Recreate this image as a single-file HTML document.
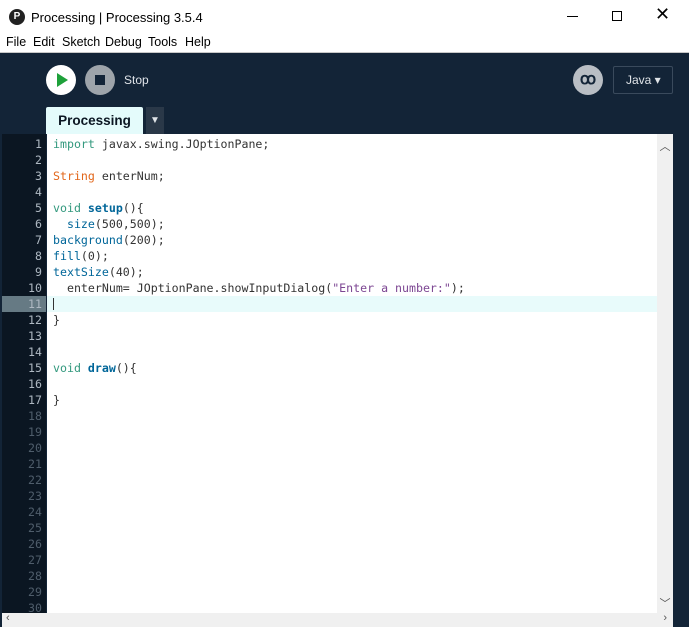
<!DOCTYPE html>
<html><head><style>
*{margin:0;padding:0;box-sizing:border-box}
body{width:689px;height:627px;overflow:hidden;background:#132437;font-family:"Liberation Sans",sans-serif;position:relative}
.title{position:absolute;left:0;top:0;width:689px;height:33px;background:#fff;font-size:13px;color:#000}
.menu{position:absolute;left:0;top:33px;width:689px;height:20px;background:#fff;font-size:12.5px;border-bottom:1px solid #c8c8c8}
.menu span{position:absolute;top:2px}
.code{font-family:"DejaVu Sans Mono","Liberation Mono",monospace;font-size:11.6px}
.gut{position:absolute;left:2px;top:134px;width:44px;height:479px;background:#0b1622}
.ed{position:absolute;left:47px;top:134px;width:610px;height:479px;background:#fff}
.ln{position:absolute;right:4px;width:40px;text-align:right;line-height:16px}
.cl{position:absolute;left:53px;line-height:16px;color:#333;white-space:pre}
.k{color:#33997e}.t{color:#e2661a}.f{color:#006699;font-weight:bold}.b{color:#006699}.s{color:#7d4793}
</style></head><body>
<div class="title">
<div style="position:absolute;left:9px;top:9px;width:16px;height:16px;border-radius:50%;background:#222;color:#fff;font-size:10px;font-weight:bold;text-align:center;line-height:16px">P</div>
<div style="position:absolute;left:31px;top:10px">Processing | Processing 3.5.4</div>
<div style="position:absolute;left:567px;top:16px;width:11px;height:1px;background:#000"></div>
<div style="position:absolute;left:612px;top:11px;width:10px;height:10px;border:1px solid #000"></div>
<div style="position:absolute;left:655px;top:4px;font-size:18px">✕</div>
</div>
<div class="menu"><span style="left:6px">File</span><span style="left:33px">Edit</span><span style="left:62px">Sketch</span><span style="left:105px">Debug</span><span style="left:148px">Tools</span><span style="left:185px">Help</span></div>
<div style="position:absolute;left:46px;top:65px;width:30px;height:30px;border-radius:50%;background:#fff"></div>
<div style="position:absolute;left:57px;top:73px;width:0;height:0;border-left:11px solid #1ea13a;border-top:7px solid transparent;border-bottom:7px solid transparent"></div>
<div style="position:absolute;left:85px;top:65px;width:30px;height:30px;border-radius:50%;background:#9ea4aa"></div>
<div style="position:absolute;left:95px;top:75px;width:10px;height:10px;background:#132437"></div>
<div style="position:absolute;left:124px;top:73px;color:#dfe3e8;font-size:12px">Stop</div>
<div style="position:absolute;left:573px;top:65px;width:30px;height:30px;border-radius:50%;background:#b9bec4;color:#132437;font-size:16px;font-weight:bold;text-align:center;line-height:30px">ꝏ</div>
<div style="position:absolute;left:613px;top:66px;width:60px;height:28px;border:1px solid #3a4a5c;border-radius:2px;color:#e0e4e8;font-size:12px;line-height:26px;padding-left:12px">Java ▾</div>
<div style="position:absolute;left:46px;top:107px;width:97px;height:27px;background:#e4fbfb;color:#0b1622;font-weight:bold;font-size:13.5px;text-align:center;line-height:27px;border-radius:2px 2px 0 0">Processing</div>
<div style="position:absolute;left:146px;top:107px;width:18px;height:27px;background:#2a3848;color:#e0e4e8;font-size:10px;text-align:center;line-height:27px">▼</div>
<div class="gut"></div>
<div class="ed"></div>
<div style="position:absolute;left:2px;top:296px;width:44px;height:16px;background:#667a84"></div>
<div style="position:absolute;left:47px;top:296px;width:610px;height:16px;background:#e8fbfb"></div>
<div style="position:absolute;left:53px;top:298px;width:1px;height:12px;background:#333"></div>
<div style="position:absolute;left:657px;top:134px;width:16px;height:479px;background:#f0f0f0;font-size:11px;color:#555;text-align:center"><div style="margin-top:4px">︿</div><div style="position:absolute;top:461px;width:16px">﹀</div></div>
<div style="position:absolute;left:2px;top:613px;width:671px;height:14px;background:#f0f0f0;font-size:11px;color:#555"><span style="position:absolute;left:4px;top:-1px">‹</span><span style="position:absolute;right:6px;top:-1px">›</span></div>
<div class="code" id="c"></div>
<script>
var lines=['<span class="k">import</span> javax.swing.JOptionPane;','','<span class="t">String</span> enterNum;','','<span class="k">void</span> <span class="f">setup</span>(){','  <span class="b">size</span>(500,500);','<span class="b">background</span>(200);','<span class="b">fill</span>(0);','<span class="b">textSize</span>(40);','  enterNum= JOptionPane.showInputDialog(<span class="s">"Enter a number:"</span>);','','}','','','<span class="k">void</span> <span class="f">draw</span>(){','','}'];
var h='';
for(var i=0;i<30;i++){var y=136+i*16;h+='<div class="ln" style="left:2px;top:'+y+'px;color:'+(i<17?'#aeb8c2':'#4f5d6b')+'">'+(i+1)+'</div>';if(lines[i])h+='<div class="cl" style="top:'+y+'px">'+lines[i]+'</div>';}
document.getElementById('c').innerHTML=h;
</script>
</body></html>
